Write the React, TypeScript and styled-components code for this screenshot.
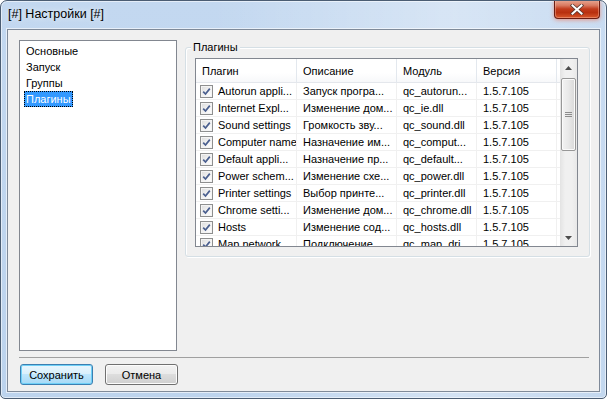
import React from 'react';
import styled, { createGlobalStyle } from 'styled-components';

const GlobalStyle = createGlobalStyle`
  html, body {
    margin: 0;
    padding: 0;
    background: #ffffff;
  }
  body {
    font-family: 'Liberation Sans', Arial, sans-serif;
    font-size: 11px;
    color: #000;
  }
`;

type Plugin = { name: string; desc: string; module: string; version: string };

const plugins: Plugin[] = [
  { name: 'Autorun appli...', desc: 'Запуск програ...', module: 'qc_autorun...', version: '1.5.7.105' },
  { name: 'Internet Expl...', desc: 'Изменение дом...', module: 'qc_ie.dll', version: '1.5.7.105' },
  { name: 'Sound settings', desc: 'Громкость зву...', module: 'qc_sound.dll', version: '1.5.7.105' },
  { name: 'Computer name', desc: 'Назначение им...', module: 'qc_comput...', version: '1.5.7.105' },
  { name: 'Default appli...', desc: 'Назначение пр...', module: 'qc_default...', version: '1.5.7.105' },
  { name: 'Power schem...', desc: 'Изменение схе...', module: 'qc_power.dll', version: '1.5.7.105' },
  { name: 'Printer settings', desc: 'Выбор принте...', module: 'qc_printer.dll', version: '1.5.7.105' },
  { name: 'Chrome setti...', desc: 'Изменение дом...', module: 'qc_chrome.dll', version: '1.5.7.105' },
  { name: 'Hosts', desc: 'Изменение сод...', module: 'qc_hosts.dll', version: '1.5.7.105' },
  { name: 'Map network...', desc: 'Подключение...', module: 'qc_map_dri...', version: '1.5.7.105' },
];

const pages = ['Основные', 'Запуск', 'Группы', 'Плагины'];
const columns = [
  { title: 'Плагин', width: 101 },
  { title: 'Описание', width: 100 },
  { title: 'Модуль', width: 80 },
  { title: 'Версия', width: 80 },
];

const Window = styled.div`
  width: 607px;
  height: 399px;
  box-sizing: border-box;
  border: 1px solid #4b5d73;
  border-radius: 7px 7px 5px 5px;
  background:
    linear-gradient(90deg, rgba(255, 255, 255, 0) 35%, rgba(255, 255, 255, 0.35) 75%, rgba(255, 255, 255, 0.1) 100%),
    linear-gradient(180deg, #c3d8f0 0%, #bcd3ed 100%);
  box-shadow: inset 0 0 0 1px rgba(255, 255, 255, 0.55);
  display: flex;
  flex-direction: column;
  padding: 0 6px 6px 6px;
  overflow: hidden;
`;

const TitleBar = styled.div`
  height: 28px;
  display: flex;
  align-items: flex-start;
  justify-content: space-between;
  flex-shrink: 0;
`;

const Title = styled.span`
  margin-top: 6px;
  margin-left: 1px;
  font-size: 12.5px;
  line-height: 15px;
  color: #000;
  text-shadow: 0 0 6px rgba(255, 255, 255, 0.9);
`;

const CloseButton = styled.div`
  width: 46px;
  height: 19px;
  margin-top: -1px;
  box-sizing: border-box;
  border: 1px solid #6b1c12;
  border-top: none;
  border-radius: 0 0 4px 4px;
  background: linear-gradient(180deg, #e9a995 0%, #d97a61 30%, #c13b1c 50%, #b8300f 70%, #d9582c 100%);
  box-shadow: 0 1px 4px rgba(240, 120, 90, 0.7), inset 0 0 0 1px rgba(255, 200, 180, 0.4);
  display: flex;
  align-items: center;
  justify-content: center;
`;

const Client = styled.div`
  flex: 1;
  border: 1px solid #7f8a99;
  box-shadow: 0 0 0 1px rgba(255, 255, 255, 0.6);
  background: #f0f0f0;
  display: flex;
  flex-direction: column;
  padding: 10px 9px 6px 11px;
`;

const TopRow = styled.div`
  height: 311px;
  display: flex;
  gap: 8px;
  align-items: flex-start;
`;

const PageList = styled.div`
  width: 158px;
  height: 311px;
  box-sizing: border-box;
  border: 1px solid #828790;
  background: #fff;
  padding: 2px 0 0 4px;
  display: flex;
  flex-direction: column;
`;

const PageItem = styled.div`
  height: 16px;
  display: flex;
  align-items: stretch;
`;

const PageText = styled.span<{ $selected?: boolean }>`
  line-height: 14px;
  padding: 0 1px;
  border: 1px ${(p) => (p.$selected ? 'dotted #000' : 'solid transparent')};
  background: ${(p) => (p.$selected ? '#3399ff' : 'transparent')};
  color: ${(p) => (p.$selected ? '#fff' : '#000')};
`;

const GroupBox = styled.div`
  position: relative;
  width: 405px;
  height: 210px;
  margin-top: 7px;
  box-sizing: border-box;
  border: 1px solid #d5dfe5;
  border-radius: 3px;
  box-shadow: inset 1px 1px 0 #fff, 1px 1px 0 #fff;
  padding: 10px 11px 0 9px;
`;

const Legend = styled.span`
  position: absolute;
  top: -8px;
  left: 5px;
  padding: 0 2px;
  background: #f0f0f0;
  line-height: 14px;
`;

const ListView = styled.div`
  width: 383px;
  height: 189px;
  box-sizing: border-box;
  border: 1px solid #828790;
  background: #fff;
  display: flex;
  overflow: hidden;
`;

const TableArea = styled.div`
  flex: 1;
  display: flex;
  flex-direction: column;
  overflow: hidden;
`;

const HeaderRow = styled.div`
  height: 24px;
  display: flex;
  flex-shrink: 0;
  background: linear-gradient(180deg, #ffffff 0%, #ffffff 60%, #f7f8fa 100%);
  border-bottom: 1px solid #e4e7ec;
  box-sizing: border-box;
`;

const HeaderCell = styled.div<{ $w: number }>`
  width: ${(p) => p.$w}px;
  flex-shrink: 0;
  box-sizing: border-box;
  border-right: 1px solid #e3e8ee;
  padding-left: 6px;
  display: flex;
  align-items: center;
  color: #000;
`;

const Row = styled.div`
  height: 17px;
  display: flex;
  flex-shrink: 0;
  box-sizing: border-box;
  border-bottom: 1px solid #f0f0f0;
`;

const Cell = styled.div<{ $w: number }>`
  width: ${(p) => p.$w}px;
  flex-shrink: 0;
  box-sizing: border-box;
  border-right: 1px solid #f0f0f0;
  padding-left: 6px;
  display: flex;
  align-items: center;
  gap: 5px;
  white-space: nowrap;
  overflow: hidden;
`;

const CheckBox = styled.span`
  width: 13px;
  height: 13px;
  margin-left: -2px;
  flex-shrink: 0;
  box-sizing: border-box;
  border: 1px solid #8e8f8f;
  background: linear-gradient(135deg, #dcdcdc 0%, #f4f4f4 60%, #ffffff 100%);
  box-shadow: inset 0 0 0 1px #f4f4f4;
  display: flex;
  align-items: center;
  justify-content: center;
`;

const ScrollBar = styled.div`
  width: 17px;
  flex-shrink: 0;
  background: linear-gradient(90deg, #e3e3e3 0%, #f0f0f0 30%, #f0f0f0 70%, #e8e8e8 100%);
  display: flex;
  flex-direction: column;
  align-items: center;
`;

const ArrowBox = styled.div`
  height: 17px;
  width: 17px;
  display: flex;
  align-items: center;
  justify-content: center;
  flex-shrink: 0;
`;

const Thumb = styled.div`
  width: 15px;
  height: 73px;
  margin-top: 2px;
  box-sizing: border-box;
  border: 1px solid #979797;
  border-radius: 2px;
  background: linear-gradient(90deg, #f3f3f3 0%, #e8e8e8 50%, #d9d9d9 100%);
  box-shadow: inset 0 0 0 1px #fafafa;
  display: flex;
  align-items: center;
  justify-content: center;
`;

const Track = styled.div`
  flex: 1;
`;

const Separator = styled.div`
  height: 1px;
  margin-top: 6px;
  margin-right: 1px;
  background: #a0a0a0;
`;

const ButtonRow = styled.div`
  display: flex;
  gap: 12px;
  margin-top: 6px;
  padding-left: 1px;
`;

const Button = styled.div<{ $default?: boolean }>`
  width: 73px;
  height: 21px;
  box-sizing: border-box;
  border: 1px solid ${(p) => (p.$default ? '#3c7fb1' : '#707070')};
  border-radius: 3px;
  background: ${(p) =>
    p.$default
      ? 'linear-gradient(180deg, #eaf6fd 0%, #d9f0fc 45%, #bee6fd 50%, #a7d9f5 100%)'
      : 'linear-gradient(180deg, #f2f2f2 0%, #ebebeb 45%, #dddddd 50%, #cfcfcf 100%)'};
  box-shadow: inset 0 0 0 1px ${(p) => (p.$default ? '#6fd0f7' : '#fcfcfc')};
  display: flex;
  align-items: center;
  justify-content: center;
`;

const CheckMark = () => (
  <svg width="9" height="9" viewBox="0 0 9 9">
    <path d="M1.2 4.6 L3.5 7 L7.8 1.6" fill="none" stroke="#4a5f8f" strokeWidth="1.7" />
  </svg>
);

const CloseIcon = () => (
  <svg width="14" height="11" viewBox="0 0 14 11">
    <path d="M2.5 1.5 L11.5 9.5 M11.5 1.5 L2.5 9.5" stroke="#5a3a33" strokeWidth="3.6" strokeLinecap="square" />
    <path d="M2.5 1.5 L11.5 9.5 M11.5 1.5 L2.5 9.5" stroke="#ffffff" strokeWidth="2" strokeLinecap="square" />
  </svg>
);

const Arrow = ({ down }: { down?: boolean }) => (
  <svg width="7" height="4" viewBox="0 0 7 4">
    <path d={down ? 'M0 0 H7 L3.5 4 Z' : 'M0 4 H7 L3.5 0 Z'} fill="#4d4d4d" />
  </svg>
);

const Grip = () => (
  <svg width="7" height="6" viewBox="0 0 7 6">
    <path d="M0 0.5 H7 M0 2.5 H7 M0 4.5 H7" stroke="#8c8c8c" strokeWidth="1" />
  </svg>
);

const App = () => {
  return (
    <>
      <GlobalStyle />
      <Window>
        <TitleBar>
          <Title>[#] Настройки [#]</Title>
          <CloseButton>
            <CloseIcon />
          </CloseButton>
        </TitleBar>
        <Client>
          <TopRow>
            {/* pages */}
            <PageList>
              {pages.map((page, i) => (
                <PageItem key={page}>
                  <PageText $selected={i === pages.length - 1}>{page}</PageText>
                </PageItem>
              ))}
            </PageList>
            {/* plugins */}
            <GroupBox>
              <Legend>Плагины</Legend>
              <ListView>
                <TableArea>
                  <HeaderRow>
                    {columns.map((c) => (
                      <HeaderCell key={c.title} $w={c.width}>
                        {c.title}
                      </HeaderCell>
                    ))}
                  </HeaderRow>
                  {plugins.map((p) => (
                    <Row key={p.module}>
                      <Cell $w={columns[0].width}>
                        <CheckBox>
                          <CheckMark />
                        </CheckBox>
                        {p.name}
                      </Cell>
                      <Cell $w={columns[1].width}>{p.desc}</Cell>
                      <Cell $w={columns[2].width}>{p.module}</Cell>
                      <Cell $w={columns[3].width}>{p.version}</Cell>
                    </Row>
                  ))}
                </TableArea>
                <ScrollBar>
                  <ArrowBox>
                    <Arrow />
                  </ArrowBox>
                  <Thumb>
                    <Grip />
                  </Thumb>
                  <Track />
                  <ArrowBox>
                    <Arrow down />
                  </ArrowBox>
                </ScrollBar>
              </ListView>
            </GroupBox>
          </TopRow>
          <Separator />
          <ButtonRow>
            <Button $default>Сохранить</Button>
            <Button>Отмена</Button>
          </ButtonRow>
        </Client>
      </Window>
    </>
  );
};

export default App;
